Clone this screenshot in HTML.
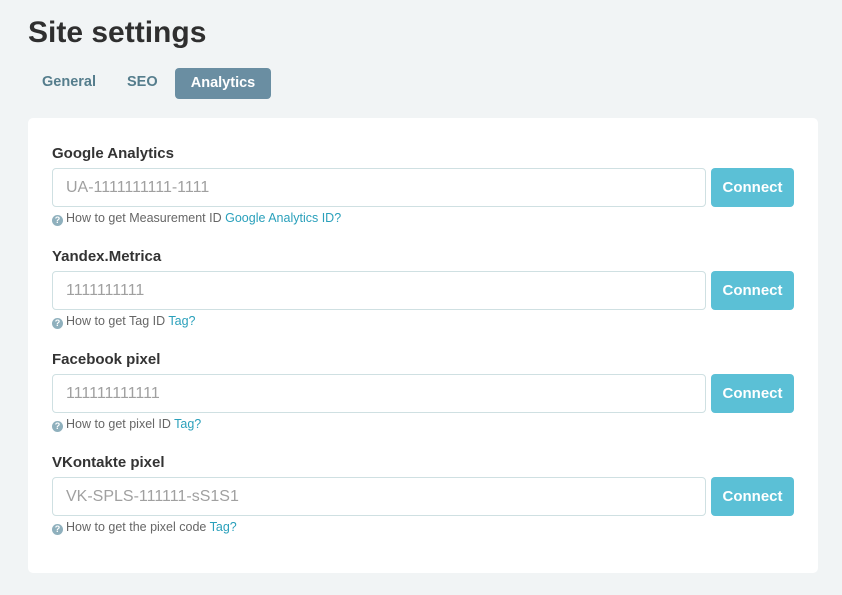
<!DOCTYPE html><html><head><style>
body{margin:0;width:842px;height:595px;background:#f1f4f5;font-family:"Liberation Sans",sans-serif;position:relative;overflow:hidden}
h1{position:absolute;left:28px;top:16px;margin:0;font-size:30px;font-weight:bold;color:#2f2f2f}
.tab{position:absolute;top:68px;height:31px;line-height:29px;font-size:14.5px;font-weight:bold;color:#557d8c}
.act{background:#6a8ea2;color:#fff;border-radius:4px;width:96px;text-align:center;line-height:31px}
.card{position:absolute;left:28px;top:118px;width:790px;height:455px;background:#fff;border-radius:5px}
.sec{position:absolute;left:52px}
.lab{font-size:15px;font-weight:bold;color:#333;position:absolute;top:-7px;white-space:nowrap}
.inp{position:absolute;top:16px;border:1px solid #cfe0e2;border-radius:4px;font-size:16px;color:#a0a0a0;line-height:37px;padding-left:13px;box-sizing:border-box;width:654px;height:39px}
.btn{position:absolute;left:659px;top:16px;width:83px;height:39px;background:#5bc0d6;border-radius:4px;color:#fff;font-weight:bold;font-size:15px;text-align:center;line-height:40px}
.help{position:absolute;top:59px;font-size:12.5px;color:#666;white-space:nowrap}
.help a{color:#2aa0bb}
.q{display:inline-block;width:11px;height:11px;border-radius:50%;background:#8fb0bd;color:#fff;font-size:9px;line-height:11px;text-align:center;font-weight:bold;margin-right:3px;vertical-align:-1px}
</style></head><body>
<h1>Site settings</h1>
<div class="tab" style="left:42px">General</div>
<div class="tab" style="left:127px">SEO</div>
<div class="tab act" style="left:175px">Analytics</div>
<div class="card"></div>
<div class="sec" style="top:152px"><div class="lab">Google Analytics</div><div class="inp">UA-1111111111-1111</div><div class="btn">Connect</div><div class="help"><span class="q">?</span>How to get Measurement ID <a>Google Analytics ID?</a></div></div>
<div class="sec" style="top:255px"><div class="lab">Yandex.Metrica</div><div class="inp">1111111111</div><div class="btn">Connect</div><div class="help"><span class="q">?</span>How to get Tag ID <a>Tag?</a></div></div>
<div class="sec" style="top:358px"><div class="lab">Facebook pixel</div><div class="inp">111111111111</div><div class="btn">Connect</div><div class="help"><span class="q">?</span>How to get pixel ID <a>Tag?</a></div></div>
<div class="sec" style="top:461px"><div class="lab">VKontakte pixel</div><div class="inp">VK-SPLS-111111-sS1S1</div><div class="btn">Connect</div><div class="help"><span class="q">?</span>How to get the pixel code <a>Tag?</a></div></div>
</body></html>
